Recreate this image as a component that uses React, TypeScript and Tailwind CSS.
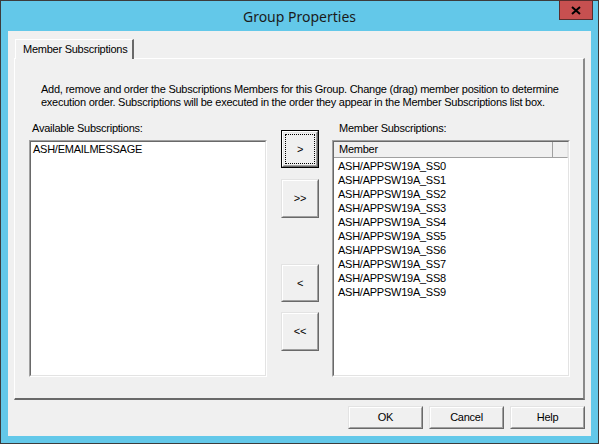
import React from "react";

const font = { fontFamily: '"Liberation Sans", Arial, sans-serif' };

const members = [
  "ASH/APPSW19A_SS0",
  "ASH/APPSW19A_SS1",
  "ASH/APPSW19A_SS2",
  "ASH/APPSW19A_SS3",
  "ASH/APPSW19A_SS4",
  "ASH/APPSW19A_SS5",
  "ASH/APPSW19A_SS6",
  "ASH/APPSW19A_SS7",
  "ASH/APPSW19A_SS8",
  "ASH/APPSW19A_SS9",
];

type BtnProps = {
  label: string
  focused?: boolean
  className?: string
}

const Button = ({label, focused, className}: BtnProps) => {
  if (focused) {
    return (
      <div className={"border border-[#000] " + (className ?? "")}>
        <div className="h-full border-t border-l border-t-[#fff] border-l-[#fff] border-b border-r border-b-[#696969] border-r-[#696969]">
          <div className="h-full border-t border-l border-t-[#e3e3e3] border-l-[#e3e3e3] border-b border-r border-b-[#a0a0a0] border-r-[#a0a0a0] p-[1px]">
            <div className="h-full flex items-center justify-center border border-dotted border-black text-black">
              {label}
            </div>
          </div>
        </div>
      </div>
    )
  }
  return (
    <div className={"border-t border-l border-t-[#e3e3e3] border-l-[#e3e3e3] border-b border-r border-b-[#696969] border-r-[#696969] " + (className ?? "")}>
      <div className="h-full flex items-center justify-center border-t border-l border-t-[#fff] border-l-[#fff] border-b border-r border-b-[#a0a0a0] border-r-[#a0a0a0] text-black">
        {label}
      </div>
    </div>
  )
}

const Sunken = ({children, className}: {children: React.ReactNode, className?: string}) => {
  return (
    <div className={"border-t border-l border-t-[#a0a0a0] border-l-[#a0a0a0] border-b border-r border-b-[#fff] border-r-[#fff] " + (className ?? "")}>
      <div className="h-full border-t border-l border-t-[#696969] border-l-[#696969] border-b border-r border-b-[#e3e3e3] border-r-[#e3e3e3] bg-white">
        {children}
      </div>
    </div>
  )
}

export default function App() {
  return (
    <div className="w-[599px] h-[444px] border border-[#3c3c3c] bg-[#63c8e9] flex flex-col" style={font}>
      <div className="relative h-[30px] shrink-0">
        <div className="h-full flex items-center justify-center text-[14px] text-[#1b1b1b] pt-[1px]" style={{fontFamily: '"Noto Sans", "Open Sans", sans-serif'}}>
          Group Properties
        </div>
        <div className="absolute top-[-1px] right-[5px] w-[34px] h-[20px] bg-[#c75050] border border-[#5a2d2d] flex items-center justify-center">
          <svg width="10" height="9" viewBox="0 0 10 9">
            <path d="M1 1 L9 8 M9 1 L1 8" stroke="#000" strokeWidth="2"/>
          </svg>
        </div>
      </div>

      <div className="mx-[7px] mb-[7px] flex-1 bg-[#f0f0f0] flex flex-col text-[11px] tracking-[-0.25px] text-black">
        {/* tab header */}
        <div className="pt-[7px] pl-[6px] h-[27px] flex items-end">
          <div className="ml-[1px] h-[20px] w-[119px] border-t border-l border-t-[#fff] border-l-[#fff] border-r-2 border-r-[#696969] flex items-center pl-[7px] relative z-10 bg-[#f0f0f0] mb-[-1px] whitespace-nowrap">
            Member Subscriptions
          </div>
        </div>

        {/* tab panel */}
        <div className="ml-[6px] w-[571px] h-[342px] border-t border-l border-t-[#fff] border-l-[#fff] border-b-2 border-r-2 border-b-[#696969] border-r-[#8a8a8a] flex flex-col">
          <div className="pl-[26px] pt-[24px] leading-[13px] whitespace-nowrap">
            <div>Add, remove and order the Subscriptions Members for this Group. Change (drag) member position to determine</div>
            <div>execution order. Subscriptions will be executed in the order they appear in the Member Subscriptions list box.</div>
          </div>

          <div className="flex flex-row pl-[14px] mt-[13px]">
            <div className="flex flex-col w-[238px]">
              <div className="pl-[3px] h-[18px] leading-[13px]">Available Subscriptions:</div>
              <Sunken className="h-[237px]">
                <div className="pl-[2px] pt-[1px] leading-[13px]">ASH/EMAILMESSAGE</div>
              </Sunken>
            </div>

            <div className="flex flex-col w-[38px] ml-[14px] pt-[8px]">
              <Button label=">" focused className="h-[38px]"/>
              <Button label=">>" className="h-[39px] mt-[11px]"/>
              <Button label="<" className="h-[38px] mt-[46px]"/>
              <Button label="<<" className="h-[39px] mt-[10px]"/>
            </div>

            <div className="flex flex-col w-[238px] ml-[13px]">
              <div className="pl-[7px] h-[18px] leading-[13px]">Member Subscriptions:</div>
              <Sunken className="h-[237px]">
                <div className="flex flex-row h-[16px] bg-white">
                  <div className="w-[219px] border-r border-b border-r-[#a0a0a0] border-b-[#a0a0a0] bg-[#f0f0f0] pl-[5px] leading-[15px]">
                    Member
                  </div>
                  <div className="flex-1 border-b border-r border-b-[#a0a0a0] border-r-[#e3e3e3] bg-[#f0f0f0]"></div>
                </div>
                <div className="pl-[4px] pt-[1px]">
                  {members.map((m, index) => (
                    <div key={index} className="h-[14px] leading-[14px]">{m}</div>
                  ))}
                </div>
              </Sunken>
            </div>
          </div>
        </div>

        <div className="flex flex-row justify-end pr-[6px] pt-[6px] gap-[6px]">
          <Button label="OK" className="w-[75px] h-[23px]"/>
          <Button label="Cancel" className="w-[75px] h-[23px]"/>
          <Button label="Help" className="w-[75px] h-[23px]"/>
        </div>
      </div>
    </div>
  );
}
